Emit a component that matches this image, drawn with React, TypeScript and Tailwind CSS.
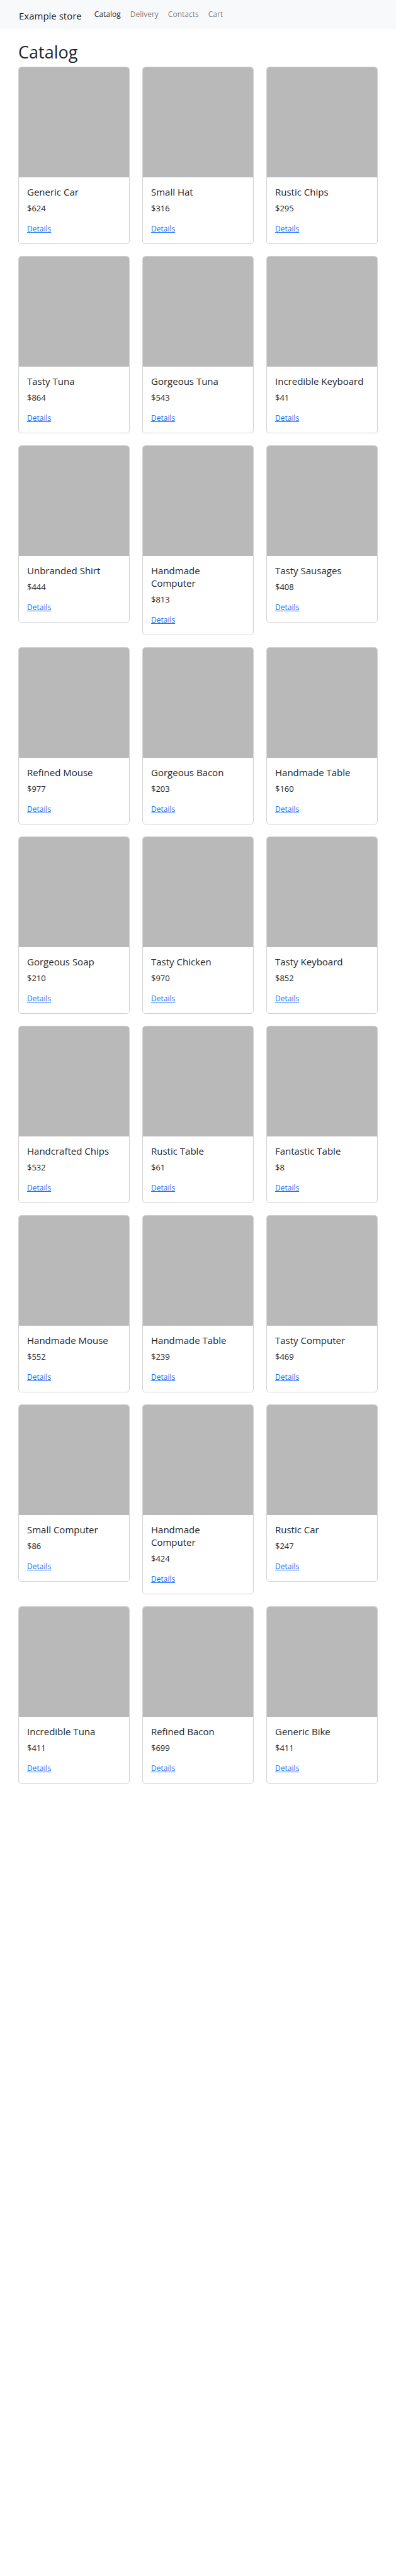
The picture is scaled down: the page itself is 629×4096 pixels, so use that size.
const links = ["Catalog", "Delivery", "Contacts", "Cart"];

const products: [string, number][] = [
  ["Generic Car", 624],
  ["Small Hat", 316],
  ["Rustic Chips", 295],
  ["Tasty Tuna", 864],
  ["Gorgeous Tuna", 543],
  ["Incredible Keyboard", 41],
  ["Unbranded Shirt", 444],
  ["Handmade Computer", 813],
  ["Tasty Sausages", 408],
  ["Refined Mouse", 977],
  ["Gorgeous Bacon", 203],
  ["Handmade Table", 160],
  ["Gorgeous Soap", 210],
  ["Tasty Chicken", 970],
  ["Tasty Keyboard", 852],
  ["Handcrafted Chips", 532],
  ["Rustic Table", 61],
  ["Fantastic Table", 8],
  ["Handmade Mouse", 552],
  ["Handmade Table", 239],
  ["Tasty Computer", 469],
  ["Small Computer", 86],
  ["Handmade Computer", 424],
  ["Rustic Car", 247],
  ["Incredible Tuna", 411],
  ["Refined Bacon", 699],
  ["Generic Bike", 411],
];

function Navbar() {
  return (
    <nav className="flex h-[46px] items-center bg-[#f8f9fb] px-[30px]">
      <a href="#" className="mr-5 pt-1 text-[15px] leading-5 text-black/90">
        Example store
      </a>
      <ul className="flex gap-[15px]">
        {links.map((label, i) => (
          <li key={label}>
            <a
              href="#"
              className={i === 0 ? "block leading-5 text-black/90" : "block leading-5 text-black/55"}
            >
              {label}
            </a>
          </li>
        ))}
      </ul>
    </nav>
  );
}

function ProductCard({ name, price }: { name: string; price: number }) {
  return (
    <article className="overflow-hidden rounded-[5px] border border-[#d2d2d2] bg-white">
      <div className="aspect-square bg-[#b9b9b9]" />
      <div className="p-[13px] leading-5">
        <h2 className="mb-[6px] text-[15px] leading-5">{name}</h2>
        <p className="mb-[13px] text-[13px] leading-5">${price}</p>
        <a href="#" className="block w-fit text-[#0d6efd] underline">
          Details
        </a>
      </div>
    </article>
  );
}

export default function App() {
  return (
    <div className="min-h-screen bg-white font-['Open_Sans','Noto_Sans',sans-serif] text-[12px] text-[#212529]">
      <Navbar />
      <main className="px-[29px] pt-5">
        <h1 className="mb-[6px] text-[27px] leading-[34px]">Catalog</h1>
        <div className="grid grid-cols-3 items-start gap-x-5 gap-y-[19px]">
          {products.map(([name, price], i) => (
            <ProductCard key={i} name={name} price={price} />
          ))}
        </div>
      </main>
    </div>
  );
}
